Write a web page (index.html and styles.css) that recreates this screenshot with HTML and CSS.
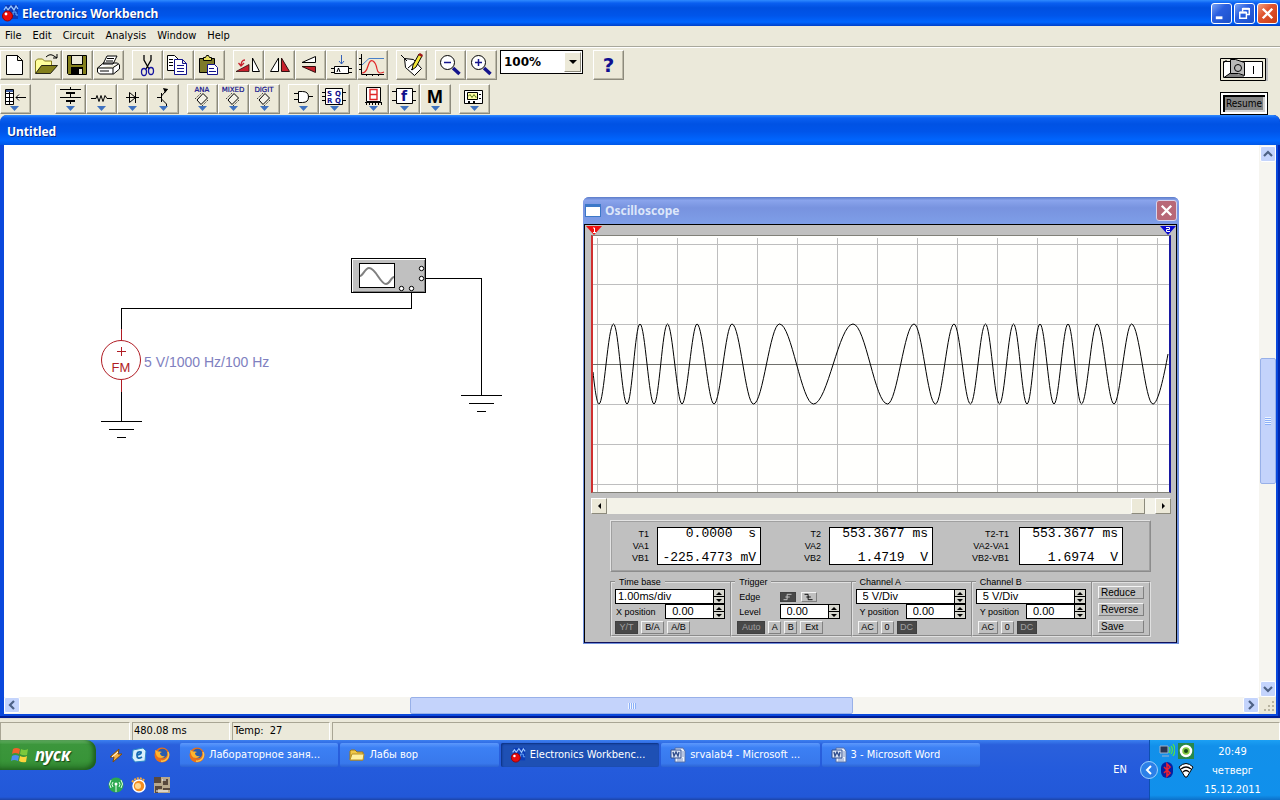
FILE: index.html
```html
<!DOCTYPE html>
<html lang="ru">
<head>
<meta charset="utf-8">
<title>Electronics Workbench</title>
<link rel="stylesheet" href="styles.css">
</head>
<body>
<svg class="defs" width="0" height="0" aria-hidden="true">
  <symbol id="app" viewBox="0 0 18 18"><path fill="#0a3cb8" d="M4 1h13v14H4z"/><path fill="none" stroke="#9cc8ff" stroke-width="1.300" d="M3 6l2-3 2 3 3-4 3 4 2-4 2 3"/><path fill="none" stroke="#6cb0ff" d="M10 11h2V8h3v3h2"/><circle cx="6.500" cy="12" r="5" fill="#e80c0c" stroke="#900"/><circle cx="5" cy="10" r="1.400" fill="#fff"/></symbol>
  <symbol id="chev" viewBox="0 0 10 10"><path fill="none" stroke="#4d6185" stroke-width="2.200" d="M1 7l4-4 4 4"/></symbol>
  <symbol id="drop" viewBox="0 0 9 5"><path fill="#3f72c0" d="M0 0h9L4.500 5z"/></symbol>
  <symbol id="chip" viewBox="0 0 14 14"><path fill="#f4f2e8" stroke="#000" d="M8 1.500l4.500 4.500-6.500 6.500-4-4.500z"/><path fill="none" stroke="#000" stroke-dasharray="1 1.500" d="M0 7l7-7M7 14l7-7"/></symbol>
  <symbol id="fox" viewBox="0 0 16 16"><circle cx="8" cy="8" r="7.500" fill="#e9701a"/><circle cx="8.500" cy="6.500" r="4.800" fill="#2a5cae"/><path fill="#ffb52e" d="M1 3c1 5 2 8 6 8 2 0 3-1 4-2-3 1-5-1-5-3l2-1C5 4 4 5 3 4z"/><path fill="none" stroke="#f9c44a" stroke-width="1.500" d="M14 5c2 5-2 10-7 9"/></symbol>
  <symbol id="word" viewBox="0 0 16 16"><path fill="#eef3fb" stroke="#526eaa" d="M5 1h8l2 3v11H5z"/><path stroke="#7f96c8" d="M7 12h6M7 14h6M12 5h2M12 7h2M12 9h2"/><path fill="#dce6f7" stroke="#324f8d" d="M1 3h10v8H1z"/><path fill="none" stroke="#324f8d" stroke-width="1.400" d="M3 5l1 4 2-4 2 4 1-4"/></symbol>
</svg>

<header class="titlebar">
  <svg class="i18"><use href="#app"/></svg>
  <h1>Electronics Workbench</h1>
  <button class="cap" aria-label="Minimize"><svg viewBox="0 0 20 20"><path fill="#fff" d="M4 13h7v3H4z"/></svg></button>
  <button class="cap" aria-label="Restore"><svg viewBox="0 0 20 20"><path fill="none" stroke="#fff" stroke-width="1.500" d="M8 8V5h7v6h-3M5 9h7v6H5z"/><path stroke="#fff" stroke-width="2" d="M8 5h7M5 9h7"/></svg></button>
  <button class="cap close" aria-label="Close"><svg viewBox="0 0 20 20"><path stroke="#fff" stroke-width="2.500" d="M5 5l10 10M15 5L5 15"/></svg></button>
</header>

<nav class="menu">
  <button>File</button><button>Edit</button><button>Circuit</button><button>Analysis</button><button>Window</button><button>Help</button>
</nav>

<section class="tools">
  <div class="rows">
    <div class="row">
      <div class="grp">
        <button class="tb" aria-label="New"><svg viewBox="0 0 30 29"><path fill="#fff" stroke="#000" d="M6.500 5.500h11l5 5v14h-16zM17.500 5.500v5h5"/></svg></button>
        <button class="tb" aria-label="Open"><svg viewBox="0 0 30 29"><path fill="#ffff9c" stroke="#867c1c" d="M4.500 23V11l2-2h5l2 2h7v4"/><path fill="#84801c" stroke="#000" stroke-width=".8" d="M4.500 23.500l6-8h16l-7 8z"/><path fill="none" stroke="#000" d="M15 7q4-4 8-1l3 2M26 4v4h-4"/></svg></button>
        <button class="tb" aria-label="Save"><svg viewBox="0 0 30 29"><path fill="#84801c" stroke="#000" d="M5.500 5.500h19v19h-18l-1-1z"/><path fill="#ece9d8" stroke="#000" d="M9.500 5.500h11v9h-11z"/><path d="M9 17h12v7H9z"/><path fill="#ece9d8" d="M17 19h3v5h-3z"/></svg></button>
        <button class="tb" aria-label="Print"><svg viewBox="0 0 30 29"><path fill="#fff" stroke="#000" d="M10 14l4-8h10l-4 8zM4.500 18l6-5h14l2 2v4l-6 5h-14l-2-2zM4.500 18h15l6-4M20 18v6M14 8.500h7M13 11h7M7 21h9"/></svg></button>
      </div>
      <div class="grp">
        <button class="tb" aria-label="Cut"><svg viewBox="0 0 30 29"><path stroke="#000" fill="none" stroke-width="1.300" d="M12 5v5l5 9M19 5v5l-5 9"/><ellipse cx="12" cy="22" rx="2.500" ry="3.500" fill="none" stroke="#1414a0" stroke-width="1.300"/><ellipse cx="19" cy="21" rx="2.500" ry="3.500" fill="none" stroke="#1414a0" stroke-width="1.300"/></svg></button>
        <button class="tb" aria-label="Copy"><svg viewBox="0 0 30 29"><path fill="#fff" stroke="#000" d="M4.500 5.500h7l4 4v11h-11z"/><path fill="#fff" stroke="#14148c" d="M11.500 9.500h8l4 4v11h-12zM19.500 9.500v4h4"/><path stroke="#000" d="M6 9.500h4M6 12.500h4M6 15.500h4"/><path stroke="#14148c" d="M14 15.500h7M14 18.500h7M14 21.500h7"/></svg></button>
        <button class="tb" aria-label="Paste"><svg viewBox="0 0 30 29"><path fill="#7d7a2a" stroke="#000" d="M5.500 8.500h15v14h-15z"/><path fill="#e8e060" stroke="#000" d="M9.500 10.500v-3h2l1-2h2l1 2h2v3z"/><path fill="#fff" stroke="#14148c" d="M13.500 14.500h7l3 3v7h-10zM15 18.500h5M15 21.500h7"/></svg></button>
      </div>
      <div class="grp">
        <button class="tb" aria-label="Rotate"><svg viewBox="0 0 30 29"><path fill="#c8202c" stroke="#301010" stroke-width=".8" d="M3 21.500l13-7v7z"/><path fill="#fff" stroke="#000" d="M19.500 8v13.500h7z"/><path fill="none" stroke="#c8202c" stroke-width="1.300" d="M12 10q-4 0-4 6M5.500 13L8 16l3-3"/></svg></button>
        <button class="tb" aria-label="Flip horizontal"><svg viewBox="0 0 30 29"><path fill="#fff" stroke="#000" d="M14.500 8v13.500h-8z"/><path fill="#c8202c" stroke="#301010" d="M17.500 8v13.500h8z"/></svg></button>
        <button class="tb" aria-label="Flip vertical"><svg viewBox="0 0 30 29"><path fill="#fff" stroke="#000" d="M7 12.500l13.500-6v6z"/><path fill="#c8202c" stroke="#301010" d="M7 16.500h13.500v6z"/></svg></button>
        <button class="tb" aria-label="Label"><svg viewBox="0 0 30 29"><path fill="none" stroke="#3460b8" d="M15.500 5v9M13 11l2.500 3 2.500-3"/><path fill="#fff" stroke="#000" d="M8.500 16.500h14v7h-14zM5 18.500h3M5 22.500h3M23 18.500h3M23 22.500h3M11 22l1.500-4 1.500 4"/></svg></button>
        <button class="tb" aria-label="Display graphs"><svg viewBox="0 0 30 29"><path fill="none" stroke="#000" d="M4.500 4v20.500H27M2 8.500h2M2 14.500h2M2 19.500h2M9.500 24v2M15.500 24v2M21.500 24v2"/><path fill="none" stroke="#4a80c8" d="M5 15l7-6.500h15"/><path fill="none" stroke="#e02828" stroke-width="1.200" d="M5 23q4 0 6-7t5-5 4 8 7 3"/></svg></button>
      </div>
      <div class="grp">
        <button class="tb" aria-label="Properties"><svg viewBox="0 0 30 29"><path fill="#fff" stroke="#000" d="M8.500 8.500l9 1 8 9-7 7-9-8zM5 5l6 6M12 18l7-6M15 20l7-6"/><path fill="#f4e83c" stroke="#000" d="M16 20l1-5 6-11 3 2-6 11z"/><path fill="#a01818" d="M22 5l2-2 3 2-1 2z"/></svg></button>
      </div>
      <div class="grp">
        <button class="tb" aria-label="Zoom out"><svg viewBox="0 0 30 29"><circle cx="12.500" cy="12.500" r="7" fill="#fff" stroke="#000"/><path stroke="#14148c" stroke-width="1.500" d="M9 12.500h7"/><path stroke="#14148c" stroke-width="3.500" d="M18 18l6.500 6"/></svg></button>
        <button class="tb" aria-label="Zoom in"><svg viewBox="0 0 30 29"><circle cx="12.500" cy="12.500" r="7" fill="#fff" stroke="#000"/><path stroke="#14148c" stroke-width="1.500" d="M9 12.500h7M12.500 9v7"/><path stroke="#14148c" stroke-width="3.500" d="M18 18l6.500 6"/></svg></button>
        <div class="zoom"><select aria-label="Zoom"><option>100%</option></select><span class="zarrow"></span></div>
        <button class="tb help" aria-label="Help">?</button>
      </div>
    </div>
    <div class="row">
      <div class="grp first">
        <button class="tb" aria-label="Favorites"><svg viewBox="0 0 30 29"><path fill="#fff" stroke="#000" d="M5.500 5.500h8v15h-8zM9.500 5v16M5 9.500h9M5 13.500h9M5 17.500h9M16 13.500h10M19 10.500l-3 3 3 3"/><path fill="#3c5ca0" d="M6 6h7v2H6z"/><use href="#drop" x="10" y="22" width="9" height="5"/></svg></button>
      </div>
      <div class="grp">
        <button class="tb" aria-label="Sources"><svg viewBox="0 0 30 29"><path fill="none" stroke="#000" d="M5 5.500h21M15.500 3v3M15.500 9v4M5 13.500h21M15.500 18v2"/><path stroke="#000" stroke-width="2" d="M11 9h9M11 17h9"/><use href="#drop" x="11" y="22" width="9" height="5"/></svg></button>
        <button class="tb" aria-label="Basic"><svg viewBox="0 0 30 29"><path fill="none" stroke="#000" d="M5 14.500h5l1-3 2 6 2-6 2 6 2-6 2 3h5"/><use href="#drop" x="11" y="22" width="9" height="5"/></svg></button>
        <button class="tb" aria-label="Diodes"><svg viewBox="0 0 30 29"><path fill="none" stroke="#000" d="M9 13.500h13M12.500 8.500v10l6-5zM18.500 8v11"/><use href="#drop" x="11" y="22" width="9" height="5"/></svg></button>
        <button class="tb" aria-label="Transistors"><svg viewBox="0 0 30 29"><path fill="none" stroke="#000" d="M9 13.500h4M13.500 9v9M13.500 12l6-7M13.500 15l5 5v2"/><path d="M15 4l5 1-3 4z"/><use href="#drop" x="11" y="22" width="9" height="5"/></svg></button>
      </div>
      <div class="grp">
        <button class="tb" aria-label="Analog ICs"><svg viewBox="0 0 30 29"><text class="ic" x="15" y="8">ANA</text><use href="#chip" x="8" y="8" width="14" height="14"/><use href="#drop" x="11" y="22" width="9" height="5"/></svg></button>
        <button class="tb" aria-label="Mixed ICs"><svg viewBox="0 0 30 29"><text class="ic" x="15" y="8">MIXED</text><use href="#chip" x="8" y="8" width="14" height="14"/><use href="#drop" x="11" y="22" width="9" height="5"/></svg></button>
        <button class="tb" aria-label="Digital ICs"><svg viewBox="0 0 30 29"><text class="ic" x="15" y="8">DIGIT</text><use href="#chip" x="8" y="8" width="14" height="14"/><use href="#drop" x="11" y="22" width="9" height="5"/></svg></button>
      </div>
      <div class="grp">
        <button class="tb" aria-label="Logic gates"><svg viewBox="0 0 30 29"><path fill="#fff" stroke="#000" d="M10.500 7.500h4q6 0 6 5.500t-6 5.500h-4z"/><path stroke="#000" d="M6 9.500h5M6 15.500h5M21 12.500h4"/><use href="#drop" x="11" y="22" width="9" height="5"/></svg></button>
        <button class="tb" aria-label="Digital"><svg viewBox="0 0 30 29"><path fill="#fff" stroke="#000" d="M6.500 4.500h17v16h-17zM3 8.500h4M3 12.500h4M3 16.500h4M24 8.500h3M24 16.500h3"/><text class="sr" x="8" y="12">S</text><text class="sr" x="16" y="12">Q</text><text class="sr" x="8" y="19">R</text><text class="sr" x="16" y="19">Q</text><use href="#drop" x="11" y="22" width="9" height="5"/></svg></button>
      </div>
      <div class="grp">
        <button class="tb" aria-label="Indicators"><svg viewBox="0 0 30 29"><path fill="#fff" stroke="#000" d="M8.500 3.500h14v14h-14z"/><path fill="none" stroke="#e02828" stroke-width="1.400" d="M12 5.500h7v10h-7zM12 10.500h7"/><path stroke="#000" d="M7 18.500h17M8.500 18v3M11.500 18v3M14.500 18v3M17.500 18v3M20.500 18v3M23.500 18v3"/><use href="#drop" x="11" y="22" width="9" height="5"/></svg></button>
        <button class="tb" aria-label="Controls"><svg viewBox="0 0 30 29"><path fill="#fff" stroke="#000" d="M7.500 4.500h16v15h-16zM3 7.500h4M3 16.500h4M24 7.500h3M24 16.500h3"/><text class="fn" x="15" y="17">f</text><use href="#drop" x="11" y="22" width="9" height="5"/></svg></button>
        <button class="tb" aria-label="Miscellaneous"><svg viewBox="0 0 30 29"><text class="mm" x="15" y="19">M</text><use href="#drop" x="11" y="22" width="9" height="5"/></svg></button>
      </div>
      <div class="grp">
        <button class="tb" aria-label="Instruments"><svg viewBox="0 0 30 29"><path fill="#fff" stroke="#000" d="M5.500 6.500h18v13h-18z"/><path fill="#ffffa8" stroke="#000" d="M8.500 8.500h10v7h-10z"/><path fill="none" stroke="#567818" d="M9 12.500l2-2 2 3 2-3 2 3 1-1"/><path d="M9 17h2v2H9zM14 17h2v2h-2zM20 10h2v1h-2zM20 14h2v1h-2z"/><use href="#drop" x="11" y="22" width="9" height="5"/></svg></button>
      </div>
    </div>
  </div>
  <div class="power">
    <button class="switch" aria-label="Power"><svg viewBox="0 0 48 24"><path fill="#c0c0c0" d="M45 0h3v23h-3z"/><path fill="#ece9d8" stroke="#000" d="M.5.500h45v22H.5z"/><path fill="#fff" stroke="#000" d="M3.500 3.500h39v16h-39z"/><path fill="#808080" d="M5 19l5-4 14 2v2z"/><path fill="#b8b8b8" stroke="#000" d="M10.500 1.500h5l9 3v13l-6-2h-8z"/><path fill="none" stroke="#000" d="M6.500 2l-3 3M4 19.500l6.500-4.500M33.500 8v8"/><circle cx="18" cy="10" r="3.500" fill="none" stroke="#000"/></svg></button>
    <button class="resume">Resume</button>
  </div>
</section>

<main class="mdi">
  <h2>Untitled</h2>
  <div class="work">
    <div class="canvas">
      <svg class="circuit" width="560" height="400" shape-rendering="crispEdges">
        <g fill="none" stroke="#000">
          <path d="M117.500 184v-20.500h290V147M420 133.500h57.500V250M457 250.500h41M465 258.500h25M473 266.500h9M117.500 247v29M97 276.500h41M105 284.500h25M113 292.500h9"/>
        </g>
        <g stroke="#b01c24" fill="none"><path d="M117.500 184v12M117.500 235v12M113 206.500h9M117.500 202v9"/><circle cx="117" cy="215" r="19.500" shape-rendering="auto"/></g>
        <text class="fm" x="117" y="227">FM</text>
        <text class="src" x="140" y="222">5 V/1000 Hz/100 Hz</text>
        <path fill="#c0c0c0" stroke="#000" d="M347.500 113.500h74v34h-74z"/>
        <path fill="none" stroke="#fff" d="M348.500 147v-32.500H421"/>
        <path fill="none" stroke="#808080" d="M349 146.500h71.500V115"/>
        <path fill="#fff" stroke="#000" d="M355.500 118.500h35v24h-35z"/>
        <path fill="none" stroke="#808080" stroke-width="2" shape-rendering="auto" d="M356 131c3 0 5-8 9-8 7 0 11 16 17 16 4 0 5-7 8-7"/>
        <g fill="#fff" stroke="#000" shape-rendering="auto"><circle cx="417.500" cy="123.500" r="2.200"/><circle cx="417.500" cy="133.500" r="2.200"/><circle cx="397.500" cy="143.500" r="2.200"/><circle cx="407.500" cy="143.500" r="2.200"/></g>
      </svg>

      <section class="osc">
        <div class="otitle"><span class="oicon"></span><h3>Oscilloscope</h3><button class="oclose" aria-label="Close oscilloscope"><svg viewBox="0 0 20 20"><path stroke="#fff" stroke-width="2.500" d="M5 5l10 10M15 5L5 15"/></svg></button></div>
        <div class="obody">
          <div class="marks">
            <svg viewBox="0 0 16 9"><path fill="#f01010" d="M0 0h16L8 9z"/><path stroke="#fff" fill="none" d="M7 2h1.500v4M7 6.500h3"/></svg>
            <svg viewBox="0 0 16 9"><path fill="#0808d0" d="M0 0h16L8 9z"/><path stroke="#fff" fill="none" d="M6 1.500h3.500v2h-3v2H10"/></svg>
          </div>
          <svg class="plot" viewBox="0 0 576 256" preserveAspectRatio="none">
            <g fill="none" stroke="#bebebe" shape-rendering="crispEdges">
              <path d="M4.500 2v254M44.500 2v254M84.500 2v254M124.500 2v254M164.500 2v254M204.500 2v254M244.500 2v254M284.500 2v254M324.500 2v254M364.500 2v254M404.500 2v254M444.500 2v254M484.500 2v254M524.500 2v254M564.500 2v254"/>
              <path d="M0 8.500h576M0 48.500h576M0 88.500h576M0 168.500h576M0 208.500h576M0 248.500h576"/>
              <path stroke="#70706c" d="M0 128.500h576"/>
            </g>
            <path fill="none" stroke="#000" d="M0 136C2 155 4 168 6 168C11 168 15 88 20.500 88C25.500 88 29 168 34 168C39 168 42 88 47 88C52 88 56 168 61 168C66 168 69.500 88 74.500 88C79.500 88 84 168 89 168C94 168 99 88 104 88C110 88 115 168 121 168C127.500 168 132.500 88 139 88C147 88 152.500 168 160.500 168C170 168 177 88 186.500 88C198.500 88 208.500 168 220.500 168C234.500 168 246 88 260 88C272.500 88 282 168 294.500 168C304 168 311.500 88 321 88C329 88 334.500 168 342.500 168C349 168 354.500 88 361 88C367 88 371.500 168 377.500 168C383 168 387 88 392.500 88C397.500 88 401.500 168 406.500 168C411.500 168 415.500 88 420.500 88C425.500 88 429 168 434 168C439 168 442 88 447 88C452 88 456 168 461 168C466 168 470 88 475 88C480 88 483.500 168 488.500 168C494 168 498.500 88 504 88C510 88 515 168 521 168C527 168 532.500 88 538.500 88C546.500 88 552 168 560 168C565 168 571 140 575 118"/>
          </svg>
          <div class="obar"><button aria-label="Scroll left"><svg viewBox="0 0 5 8"><path d="M4 1v6L1 4z"/></svg></button><span class="otrack"></span><span class="othumb"></span><span class="oend"></span><button aria-label="Scroll right"><svg viewBox="0 0 5 8"><path d="M1 1v6l3-3z"/></svg></button></div>
          <div class="reads">
            <div class="rl first">T1<br>VA1<br>VB1</div><pre>0.0000  s

-225.4773 mV</pre>
            <div class="rl">T2<br>VA2<br>VB2</div><pre>553.3677 ms

1.4719  V</pre>
            <div class="rl wide">T2-T1<br>VA2-VA1<br>VB2-VB1</div><pre>553.3677 ms

1.6974  V</pre>
          </div>
          <div class="ctl">
            <fieldset><legend>Time base</legend>
              <div class="line"><span class="spin full"><input aria-label="Time base" value="1.00ms/div"><span class="ud"><button aria-label="Up"></button><button aria-label="Down"></button></span></span></div>
              <div class="line"><label for="xp">X position</label><span class="spin"><input id="xp" class="num" value="0.00"><span class="ud"><button aria-label="Up"></button><button aria-label="Down"></button></span></span></div>
              <div class="line bts"><button class="on w23">Y/T</button><button class="w23">B/A</button><button class="w23">A/B</button></div>
            </fieldset>
            <fieldset class="in"><legend>Trigger</legend>
              <div class="line edge"><span>Edge</span><button class="on" aria-label="Rising edge"><svg viewBox="0 0 12 9"><path fill="none" stroke="#ccc" d="M1 7.500h4v-6h5M3 4.500h5"/></svg></button><button aria-label="Falling edge"><svg viewBox="0 0 12 9"><path fill="none" stroke="#000" d="M1 1.500h4v6h5M3 4.500h5"/></svg></button></div>
              <div class="line trig"><label for="lv">Level</label><span class="spin"><input id="lv" class="num" value="0.00"><span class="ud"><button aria-label="Up"></button><button aria-label="Down"></button></span></span></div>
              <div class="line bts tight"><button class="on w28">Auto</button><button>A</button><button>B</button><button class="w23">Ext</button></div>
            </fieldset>
            <fieldset class="in"><legend>Channel A</legend>
              <div class="line"><span class="spin full"><input aria-label="Channel A scale" class="num" value="5 V/Div"><span class="ud"><button aria-label="Up"></button><button aria-label="Down"></button></span></span></div>
              <div class="line"><label for="ya">Y position</label><span class="spin"><input id="ya" class="num" value="0.00"><span class="ud"><button aria-label="Up"></button><button aria-label="Down"></button></span></span></div>
              <div class="line bts"><button class="w20">AC</button><button>0</button><button class="on w20">DC</button></div>
            </fieldset>
            <fieldset class="in"><legend>Channel B</legend>
              <div class="line"><span class="spin full"><input aria-label="Channel B scale" class="num" value="5 V/Div"><span class="ud"><button aria-label="Up"></button><button aria-label="Down"></button></span></span></div>
              <div class="line"><label for="yb">Y position</label><span class="spin"><input id="yb" class="num" value="0.00"><span class="ud"><button aria-label="Up"></button><button aria-label="Down"></button></span></span></div>
              <div class="line bts"><button class="w20">AC</button><button>0</button><button class="on w20">DC</button></div>
            </fieldset>
            <div class="acts"><button>Reduce</button><button>Reverse</button><button>Save</button></div>
          </div>
        </div>
      </section>
    </div>
    <div class="vbar"><button aria-label="Scroll up"><svg><use href="#chev"/></svg></button><span class="v1"></span><span class="vthumb"></span><span class="v2"></span><button aria-label="Scroll down"><svg class="down"><use href="#chev"/></svg></button></div>
    <div class="hbar"><button aria-label="Scroll left"><svg class="left"><use href="#chev"/></svg></button><span class="h1"></span><span class="hthumb"></span><span class="h1"></span><button aria-label="Scroll right"><svg class="right"><use href="#chev"/></svg></button></div>
    <svg class="grip" viewBox="0 0 17 17"><path fill="#b8b4a0" d="M13 4h2v2h-2zM9 8h2v2H9zM13 8h2v2h-2zM5 12h2v2H5zM9 12h2v2H9zM13 12h2v2h-2z"/></svg>
  </div>
</main>

<footer class="status"><span class="s0"></span><span class="s1">480.08 ms</span><span class="s1">Temp:&nbsp; 27</span><span class="s2"></span></footer>

<div class="taskbar">
  <button class="start"><svg viewBox="0 0 18 18"><path fill="#f0622c" d="M2 3q3-2 7 0L8 8Q4 6 1 8z"/><path fill="#7cc83c" d="M10 3q4 2 7 0l-1 6q-4 1-7-1z"/><path fill="#4c8ef0" d="M1 10q3-2 7 0l-1 5q-4-2-7 0z"/><path fill="#fcd43c" d="M9 10q4 2 7 0l-1 6q-4 1-7-1z"/></svg>пуск</button>
  <div class="quick">
    <a href="#" aria-label="Winamp"><svg viewBox="0 0 16 16"><path fill="#f8b040" stroke="#7c4a10" d="M2 10l9-8-1 5h4l-9 8 1-5z"/><path stroke="#fff" d="M4 10l6-5"/></svg></a>
    <a href="#" aria-label="Outlook"><svg viewBox="0 0 16 16"><path fill="#d8f0fc" stroke="#2c88c8" d="M2 3l10-2 3 3-1 10-10 1-3-4z"/><path fill="none" stroke="#1468b0" stroke-width="1.800" d="M11 10q-5 3-5-2 0-4 4-3 1 2-4 3"/></svg></a>
    <a href="#" aria-label="Firefox"><svg><use href="#fox"/></svg></a>
    <a href="#" aria-label="Connection"><svg viewBox="0 0 16 16"><circle cx="8" cy="8" r="7.500" fill="#2ca850"/><path fill="none" stroke="#e0ffe4" d="M8 8v7M5 5q-2 2 0 5M11 5q2 2 0 5M3 3q-3 4 0 8M13 3q3 4 0 8"/><circle cx="8" cy="7" r="1.500" fill="#fff"/></svg></a>
    <a href="#" aria-label="Player"><svg viewBox="0 0 16 16"><circle cx="8" cy="9" r="6" fill="#f48c20" stroke="#fff" stroke-width="1.500"/><circle cx="7" cy="9" r="3" fill="#ffd890"/><path fill="none" stroke="#f8a838" stroke-width="2" stroke-dasharray="2 1" d="M1 5q6-7 13-1"/></svg></a>
    <a href="#" aria-label="Game"><svg viewBox="0 0 16 16"><path fill="#b8a88c" d="M0 0h16v16H0z"/><path fill="#58483c" d="M0 0h7v6H0zM9 2h5v6H9zM1 9h7v3H4v4H1zM9 11h7v2H9z"/><path stroke="#fff" d="M2 14h12M8 3h4"/></svg></a>
  </div>
  <div class="tasks">
    <button><svg><use href="#fox"/></svg><span>Лабораторное заня...</span></button>
    <button><svg viewBox="0 0 16 16"><path fill="#f0c848" stroke="#a07818" d="M1 13V4l1-1h4l2 2h6v8z"/><path fill="#fff0a0" stroke="#b89028" d="M1 13l2-6h12l-1 6z"/></svg><span>Лабы вор</span></button>
    <button class="act"><svg><use href="#app"/></svg><span>Electronics Workbenc...</span></button>
    <button><svg><use href="#word"/></svg><span>srvalab4 - Microsoft ...</span></button>
    <button><svg><use href="#word"/></svg><span>3 - Microsoft Word</span></button>
  </div>
  <span class="lang">EN</span>
  <div class="tray">
    <button class="expand" aria-label="Show hidden icons"><svg viewBox="0 0 18 18"><circle cx="9" cy="9" r="8.500" fill="#2c80e8" stroke="#9cd0fc"/><path fill="none" stroke="#fff" stroke-width="2" d="M11 5L7 9l4 4"/></svg></button>
    <div class="ti">
      <svg viewBox="0 0 16 16"><path fill="#283450" stroke="#a0b0c8" d="M1 3h8v7H1zM3 13h7"/><path fill="none" stroke="#50e050" stroke-width="1.300" d="M10 4q2 3 0 6M12 3q3 4 0 8M14 1q4 6 0 12"/></svg>
      <svg viewBox="0 0 16 16"><path fill="#28884c" d="M0 0h16v16H0z"/><circle cx="8" cy="8" r="5" fill="#84c840" stroke="#fff" stroke-width="2.500"/><circle cx="8" cy="8" r="2" fill="#184c18"/></svg>
      <svg viewBox="0 0 16 16"><rect x="2" width="12" height="16" rx="6" fill="#0820a0"/><path fill="none" stroke="#f02030" stroke-width="1.600" d="M5 5l6 6-3 3V2l3 3-6 6"/></svg>
      <svg viewBox="0 0 16 16"><path fill="#fff" stroke="#000" d="M1 5q7-7 14 0L9 15H7z"/><path fill="none" stroke="#000" stroke-width="1.300" d="M3 7q5-4 10 0M5 10q3-3 6 0"/></svg>
    </div>
    <div class="clock"><span>20:49</span><span>четверг</span><span>15.12.2011</span></div>
  </div>
</div>
</body>
</html>
```
FILE: styles.css
```css
* { box-sizing: border-box; }
body { margin: 0; min-height: 100vh; display: flex; flex-direction: column; background: #ebe9da; color: #000; font: 11px/14px "DejaVu Sans Condensed", "DejaVu Sans", sans-serif; }
button, input, select { font: inherit; color: inherit; padding: 0; margin: 0; border: 0; background: none; border-radius: 0; }
svg { display: block; }
h1, h2, h3 { margin: 0; font: bold 12px/16px "Noto Sans", sans-serif; color: #fff; text-shadow: 1px 1px 0 #0a2a88; }
.defs { position: absolute; }

.titlebar { flex: none; height: 26px; display: flex; align-items: center; gap: 2px; padding: 0 2px 0 1px; background: linear-gradient(#2f8bff 0, #0a5ff0 12%, #0050e0 30%, #0055ea 60%, #0066ff 85%, #0040c8 100%); }
.titlebar h1 { flex: 1; padding: 1px 0 0 1px; }
.i18 { width: 18px; height: 18px; }
.cap { width: 21px; height: 21px; border: 1px solid #fff; border-radius: 3px; background: linear-gradient(135deg, #7ba4f4, #2a5fe0 40%, #1c50c8); }
.cap.close { background: linear-gradient(135deg, #f0a080, #e05530 40%, #c83c14); }
.cap svg { width: 19px; height: 19px; }

.menu { flex: none; height: 21px; display: flex; align-items: center; gap: 11px; padding: 0 5px; border-bottom: 1px solid #a8a89c; }

.tools { flex: none; display: flex; justify-content: space-between; padding: 2px 12px 0 0; border-top: 1px solid #fff; height: 68px; }
.row { display: flex; gap: 8px; height: 34px; }
.grp { display: flex; }
.grp.first { margin-right: 16px; }
.tb { display: flex; align-items: flex-start; width: 31px; height: 30px; border: 1px solid; border-color: #fff #8c8a7c #8c8a7c #fff; box-shadow: inset -1px -1px #bcb9a8; background: #ece9d8; }
.tb svg { flex: none; width: 30px; height: 29px; margin: -1px; }
.help { justify-content: center; font: bold 20px/28px "DejaVu Sans", sans-serif; color: #101090; margin-left: 10px; }
.ic { font: 7px "DejaVu Sans", sans-serif; fill: #10108c; stroke: #10108c; stroke-width: .2; text-anchor: middle; }
.sr { font: bold 7px "DejaVu Sans", sans-serif; fill: #10108c; }
.fn { font: bold 14px "DejaVu Sans", sans-serif; fill: #10108c; text-anchor: middle; }
.mm { font: bold 19px "Liberation Sans", sans-serif; text-anchor: middle; }
.zoom { display: grid; grid-template-columns: 1fr 17px; width: 83px; height: 24px; margin-left: 3px; border: 1px solid #000; background: #fff; padding: 1px; }
.zoom select { grid-area: 1 / 1 / 2 / 3; appearance: none; padding-left: 2px; font: bold 12px/18px "DejaVu Sans", sans-serif; }
.zarrow { grid-area: 1 / 2; pointer-events: none; background: #ece9d8; border: 1px solid; border-color: #fff #8c8a7c #8c8a7c #fff; display: flex; align-items: center; justify-content: center; }
.zarrow::after { content: ""; border: 4px solid transparent; border-top-color: #000; border-bottom: 0; }
.power { display: flex; flex-direction: column; gap: 10px; padding-top: 8px; }
.switch, .switch svg { width: 48px; height: 24px; }
.resume { width: 48px; height: 23px; border: 1px solid #000; outline: 2px solid #fff; outline-offset: -3px; box-shadow: inset 4px 4px #000, inset -4px -4px #d0d0d0; background: #848484; font-size: 10px; }

.mdi { flex: 1; min-height: 0; display: flex; flex-direction: column; padding: 0 4px 4px; background: #0a48dc; border-radius: 7px 7px 0 0; box-shadow: inset 0 -2px #001c94, inset -2px 0 #0028b0; }
.mdi h2 { flex: none; height: 30px; margin: 0 -4px; padding: 9px 7px 0; border-radius: 7px 7px 0 0; background: linear-gradient(#2f8bff 0, #0a5ff0 10%, #0052e4 30%, #0055ea 55%, #0066ff 85%, #0058e8 100%); }
.work { flex: 1; min-height: 0; display: grid; grid-template: 1fr 17px / 1fr 17px; background: #fff; }
.canvas { position: relative; overflow: hidden; }
.fm { font: 13px "Liberation Sans", sans-serif; fill: #b01c24; text-anchor: middle; }
.src { font: 14px "Liberation Sans", sans-serif; fill: #8080c0; }
.vbar, .hbar { display: flex; background: #f6f5f0; }
.vbar { flex-direction: column; padding: 1px 0 0 1px; }
.vbar button, .hbar button { flex: none; width: 16px; height: 16px; border: 1px solid #fff; border-radius: 2px; background: #c4d4fc; display: flex; align-items: center; justify-content: center; }
.vbar button svg, .hbar button svg { width: 10px; height: 10px; }
.down { rotate: 180deg; } .left { rotate: -90deg; } .right { rotate: 90deg; }
.v1 { flex: 196; } .vthumb { flex: 125; } .v2 { flex: 197; }
.h1 { flex: 391; } .hthumb { flex: 441; }
.vthumb, .hthumb { border: 1px solid #98b0e8; border-radius: 2px; background: #c4d3fb; display: flex; align-items: center; justify-content: center; }
.hthumb::after { content: ""; width: 8px; height: 6px; background: repeating-linear-gradient(90deg, #eef4fe 0 1px, #8cb0f8 1px 2px); }
.vthumb::after { content: ""; width: 6px; height: 8px; background: repeating-linear-gradient(#eef4fe 0 1px, #8cb0f8 1px 2px); }
.grip { background: #ece9d8; width: 17px; height: 17px; }

.osc { position: absolute; left: 579px; top: 52px; width: 596px; border-radius: 6px 6px 0 0; background: #7090dc; padding: 0 2px 1px 1px; }
.otitle { height: 27px; display: flex; align-items: center; gap: 4px; padding: 0 2px; margin: 0 -2px 0 -1px; border-radius: 6px 6px 0 0; background: linear-gradient(#5c7cc8 0, #8aa4ec 12%, #7893df 40%, #7e9ee8 100%); }
.otitle h3 { flex: 1; color: #dce6fa; text-shadow: none; }
.oicon { width: 16px; height: 13px; border: 1px solid #3c78c8; border-top-width: 3px; background: #fff; }
.oclose { width: 21px; height: 21px; border: 1px solid #d8d4ec; border-radius: 3px; background: #b86878; }
.oclose svg { width: 19px; height: 19px; }
.obody { background: #c0c0c0; border: 1px solid #000; border-bottom-color: #10105c; padding: 1px 5px 5px 6px; }
.marks { display: flex; justify-content: space-between; margin: 0 -5px; height: 9px; }
.marks svg { width: 16px; height: 9px; }
.plot { width: 100%; height: 258px; background: #fffffd; border-top: 1px solid #808078; border-bottom: 1px solid #808078; border-left: 2px solid #d03030; border-right: 2px solid #1818a0; }
.obar { display: flex; height: 16px; margin: 5px 0 6px; background: #f3f2e8; }
.obar button, .othumb { width: 16px; border: 1px solid; border-color: #fff #8c8a7c #8c8a7c #fff; background: #ece9d8; display: flex; align-items: center; justify-content: center; }
.obar svg { width: 5px; height: 8px; }
.otrack { flex: 1; } .othumb { width: 14px; } .oend { width: 10px; }
.reads, .ctl { margin: 0 20px 0 19px; }
.reads { display: flex; align-items: center; height: 52px; border: 1px solid; border-color: #e4e4e4 #8c8c8c #8c8c8c #e4e4e4; outline: 1px solid #a0a0a0; outline-offset: -2px; font: 9px/12px "Liberation Sans", sans-serif; }
.reads pre { width: 104px; height: 38px; margin: 0 0 0 8px; padding: 0 4px; border: 1px solid #000; background: #fff; text-align: right; font: 13px/12px "Liberation Mono", monospace; }
.rl { width: 60px; text-align: right; }
.rl.first { width: 38px; }
.rl.wide { width: 76px; }
.reads .wide + pre { margin-left: 10px; }
.ctl { display: flex; margin-top: 4px; font: 9px/12px "Liberation Sans", sans-serif; }
fieldset { flex: 120; min-width: 0; margin: 0; padding: 1px 5px 0 3px; border: 2px groove #e0e0e0; border-right: 0; height: 61px; }
legend { padding: 0 4px; height: 12px; }
.line { display: flex; align-items: center; justify-content: space-between; height: 15px; }
.line label { padding-left: 1px; }
.in .line label, .in .edge span { padding-left: 4px; }
.spin { display: flex; width: 60px; height: 15px; border: 1px solid #000; background: #fff; }
.spin.full { width: 100%; }
.spin input { flex: 1; min-width: 0; padding-left: 2px; font: 11px/13px "Liberation Sans", sans-serif; }
.spin input.num { padding-left: 6px; }
.ud { width: 11px; display: flex; flex-direction: column; border-left: 1px solid #000; background: #d8d8d0; }
.ud button { flex: 1; display: flex; align-items: center; justify-content: center; }
.ud button + button { border-top: 1px solid #000; }
.ud button::after { content: ""; border: 3px solid transparent; border-top: 0; border-bottom-color: #000; }
.ud button + button::after { rotate: 180deg; }
.bts { justify-content: flex-start; gap: 3px; padding-top: 1px; }
.in .bts { padding-left: 2px; }
.bts.tight { gap: 3px; }
.bts button, .edge button, .acts button { border: 1px solid; border-color: #f4f4f4 #808080 #808080 #f4f4f4; height: 13px; width: 13px; font: 9px/11px "Liberation Sans", sans-serif; }
.bts .w20 { width: 20px; } .bts .w23 { width: 23px; } .bts .w28 { width: 28px; }
.bts .on, .edge .on { background: #484848; color: #a0a0a0; border-color: #404040; }
.edge { justify-content: flex-start; gap: 5px; }
.edge span { width: 40px; }
.edge button { width: 16px; height: 10px; }
.edge svg { width: 12px; height: 8px; margin-left: 1px; }
.trig .spin { margin-right: 6px; }
.acts { flex: none; width: 60px; display: flex; flex-direction: column; gap: 4px; margin-top: 5px; padding: 3px 5px 0; border: 2px groove #e0e0e0; }
.ctl .acts button { width: 46px; padding-left: 2px; text-align: left; font-size: 10px; }

.status { flex: none; height: 22px; display: flex; gap: 2px; padding-top: 3px; border-top: 1px solid #e0dcd0; }
.status span { border-left: 1px solid #a8a594; border-top: 1px solid #a8a594; border-right: 1px solid #fff; padding: 1px; }
.s0 { width: 130px; } .s1 { width: 98px; } .s2 { flex: 1; }

.taskbar { flex: none; height: 60px; display: flex; align-items: flex-start; color: #fff; background: linear-gradient(#3c80f0 0, #2a60dc 8%, #245bdc 50%, #2258d8 95%, #1c44a8 100%); }
.start { width: 96px; height: 30px; display: flex; align-items: center; gap: 6px; padding-left: 11px; border-radius: 0 10px 10px 0; background: linear-gradient(#6cb86c 0, #3c963c 15%, #389438 70%, #2c7c2c 100%); box-shadow: inset -3px -1px 4px #1c5c1c; font: italic bold 17px/20px "Noto Sans", sans-serif; text-shadow: 1px 1px 1px #184818; }
.start svg { width: 18px; height: 18px; }
.quick { width: 84px; display: grid; grid-template: 30px 30px / repeat(3, 23px); padding-left: 12px; align-items: center; }
.quick svg { width: 16px; height: 16px; }
.tasks { flex: 1; max-width: 800px; display: grid; grid-template-columns: repeat(5, 1fr); gap: 2px; padding-top: 3px; }
.tasks button { min-width: 0; height: 24px; display: flex; align-items: center; gap: 4px; padding: 0 9px; border-radius: 2px; background: linear-gradient(#5c98fc, #3c80f4 20%, #3878ec 85%, #2c64d4); }
.tasks button.act { background: #1e50b4; box-shadow: inset 1px 1px 2px #0c3080; }
.tasks svg { flex: none; width: 16px; height: 16px; }
.tasks span { white-space: nowrap; overflow: hidden; }
.lang { margin-left: auto; padding: 23px 22px 0 0; }
.tray { flex: none; width: 131px; height: 60px; display: flex; align-items: center; background: linear-gradient(#1ca0f4 0, #1290ea 10%, #1090ec 92%, #0c70c8); border-left: 1px solid #0c50b0; }
.expand { width: 18px; margin-left: -10px; }
.expand svg { width: 18px; height: 18px; }
.ti { display: grid; grid-template-columns: 16px 16px; gap: 3px; margin: 0 0 19px 1px; }
.ti svg { width: 16px; height: 16px; }
.clock { flex: 1; display: flex; flex-direction: column; padding: 1px 9px 0 0; text-align: center; line-height: 19px; }
```
